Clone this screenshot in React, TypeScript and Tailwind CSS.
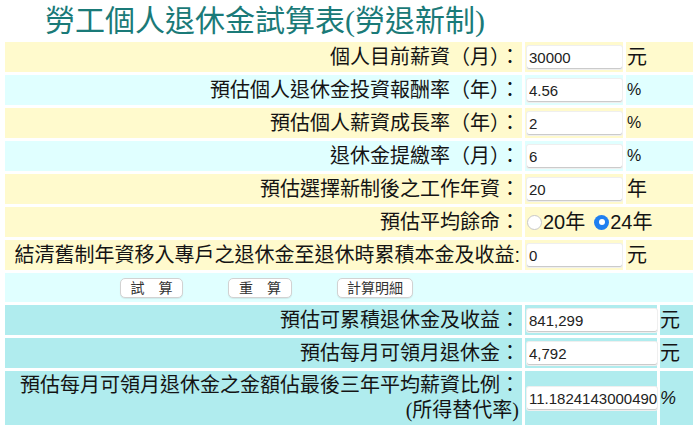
const Field = ({ value, wide }: { value: string; wide?: boolean }) => (
  <input
    readOnly
    defaultValue={value}
    className={
      (wide ? "w-[130px]" : "w-[95px]") +
      " ml-[2px] h-[23px] bg-white rounded-[2px] shadow-[0_0_0_1px_#efefef,inset_0_-1px_0_#cbcbcb] pl-[2px] text-[15px] text-[#222] outline-none font-['Liberation_Sans',sans-serif]"
    }
  />
);

const Unit = ({ text }: { text: string }) =>
  text === "%" ? (
    <span className="text-[16px] font-['Liberation_Sans',sans-serif]">%</span>
  ) : (
    <span className="text-[20px]">{text}</span>
  );

const Row = ({ label, value, unit, bg }: { label: string; value: string; unit: string; bg: string }) => (
  <div className="grid grid-cols-[517px_98px_1fr] gap-x-[3px] h-[30px]">
    <div className={bg + " flex items-center justify-end pr-[2px] text-[20px]"}>{label}</div>
    <div className={bg + " flex items-center"}>
      <Field value={value} />
    </div>
    <div className={bg + " flex items-center pl-[1px]"}>
      <Unit text={unit} />
    </div>
  </div>
);

const ResultRow = ({ label, value, unit }: { label: string; value: string; unit: string }) => (
  <div className="grid grid-cols-[517px_132px_1fr] gap-x-[3px] h-[30px]">
    <div className="bg-[#b0ecee] flex items-center justify-end pr-[2px] text-[20px]">{label}</div>
    <div className="bg-[#b0ecee] flex items-center">
      <Field value={value} wide />
    </div>
    <div className="bg-[#b0ecee] flex items-center">
      <Unit text={unit} />
    </div>
  </div>
);

const Radio = ({ checked }: { checked?: boolean }) =>
  checked ? (
    <span className="w-[15px] h-[15px] rounded-full bg-[#1f7ff0] flex items-center justify-center">
      <span className="w-[6px] h-[6px] rounded-full bg-white" />
    </span>
  ) : (
    <span className="w-[15px] h-[15px] rounded-full bg-white border border-[#c8c8c8]" />
  );

const Btn = ({ text, w }: { text: string; w: string }) => (
  <button
    className={
      w +
      " h-[20px] bg-white border border-[#d2d2d2] rounded-[5px] shadow-[0_1px_1px_rgba(0,0,0,0.08)] text-[14px] leading-none text-[#333] flex items-center justify-center"
    }
  >
    {text}
  </button>
);

export default function App() {
  const yellow = "bg-[#fffacd]";
  const cyan = "bg-[#e0ffff]";
  return (
    <div className="w-[700px] h-[430px] bg-white overflow-hidden text-[#141414] font-['Liberation_Sans','Noto_Sans_CJK_TC',sans-serif]">
      <h1 className="h-[42px] pl-[45px] text-[30px] leading-[42px] text-[#1a7a78] font-['Liberation_Serif','Noto_Sans_CJK_TC',serif]">
        勞工個人退休金試算表(勞退新制)
      </h1>
      <div className="ml-[5px] w-[688px] flex flex-col gap-y-[3px]">
        <Row label="個人目前薪資（月）：" value="30000" unit="元" bg={yellow} />
        <Row label="預估個人退休金投資報酬率（年）：" value="4.56" unit="%" bg={cyan} />
        <Row label="預估個人薪資成長率（年）：" value="2" unit="%" bg={yellow} />
        <Row label="退休金提繳率（月）：" value="6" unit="%" bg={cyan} />
        <Row label="預估選擇新制後之工作年資：" value="20" unit="年" bg={yellow} />
        <div className="grid grid-cols-[517px_1fr] gap-x-[3px] h-[30px]">
          <div className={yellow + " flex items-center justify-end pr-[2px] text-[20px]"}>預估平均餘命：</div>
          <div className={yellow + " flex items-center pl-[2px] text-[20px]"}>
            <Radio />
            <span className="ml-[1px]">20年</span>
            <span className="ml-[9px]">
              <Radio checked />
            </span>
            <span className="ml-[1px]">24年</span>
          </div>
        </div>
        <Row label="結清舊制年資移入專戶之退休金至退休時累積本金及收益:" value="0" unit="元" bg={yellow} />
        <div className={cyan + " h-[29px] flex items-center pl-[115px] gap-x-[45px]"}>
          <Btn text="試　算" w="w-[63px]" />
          <Btn text="重　算" w="w-[64px]" />
          <Btn text="計算明細" w="w-[76px]" />
        </div>
        <ResultRow label="預估可累積退休金及收益：" value="841,299" unit="元" />
        <ResultRow label="預估每月可領月退休金：" value="4,792" unit="元" />
        <div className="grid grid-cols-[517px_132px_1fr] gap-x-[3px] h-[54px]">
          <div className="bg-[#b0ecee] flex flex-col items-end justify-center pr-[2px] text-[20px] leading-[25px]">
            <span>預估每月可領月退休金之金額佔最後三年平均薪資比例：</span>
            <span className="pr-[1px]">
              <span className="font-['Liberation_Serif',serif]">(</span>所得替代率<span className="font-['Liberation_Serif',serif]">)</span>
            </span>
          </div>
          <div className="bg-[#b0ecee] flex items-center">
            <Field value="11.1824143000490" wide />
          </div>
          <div className="bg-[#b0ecee] flex items-center">
            <span className="text-[18px] italic font-['Liberation_Sans',sans-serif]">%</span>
          </div>
        </div>
      </div>
    </div>
  );
}
